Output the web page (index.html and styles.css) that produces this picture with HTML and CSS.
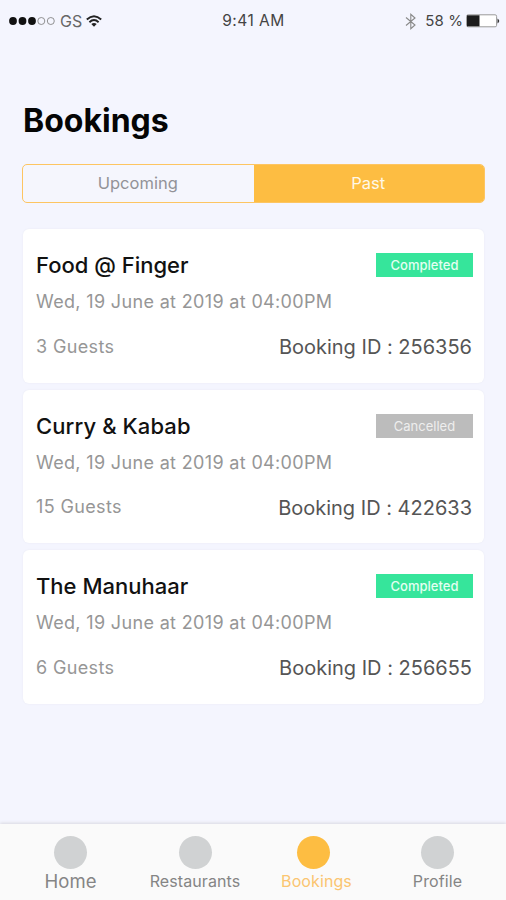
FILE: index.html
```
<!DOCTYPE html>
<html lang="en">
<head>
<meta charset="utf-8">
<title>Bookings</title>
<link rel="stylesheet" href="styles.css">
</head>
<body>
<div class="screen">
  <header class="status">
    <div class="carrier">
      <svg width="46" height="12" viewBox="0 0 46 12"><g fill="#111"><circle cx="4" cy="6" r="3.9"/><circle cx="13.5" cy="6" r="3.9"/><circle cx="23" cy="6" r="3.9"/></g><g fill="none" stroke="#777" stroke-width=".8"><circle cx="32.3" cy="6" r="3.5"/><circle cx="41.8" cy="6" r="3.5"/></g></svg>
      <span class="operator">GS</span>
      <svg class="wifi" width="16" height="12" viewBox="0 0 16 12"><g fill="none" stroke="#222" stroke-width="1.9"><path d="M.8 4.5Q8-2 15.2 4.5"/><path d="M3.4 7.2Q8 3 12.6 7.2"/></g><path d="M5.3 9Q8 6.8 10.7 9L8 11.8z" fill="#222"/></svg>
    </div>
    <span class="time">9:41 AM</span>
    <div class="power">
      <svg width="12" height="17" viewBox="0 0 12 17"><path d="M1 4.5 10 12 5.8 15.7V1.3L10 5 1 12.5" fill="none" stroke="#888" stroke-width="1.1"/></svg>
      <span class="percent">58 %</span>
      <svg class="battery" width="34" height="14" viewBox="0 0 34 14"><rect x=".6" y=".8" width="30" height="12" rx="1.5" fill="#fff" stroke="#999" stroke-width="1"/><path d="M1 1.3h12.5v11H1z" fill="#1c1c1c"/><path d="M31.5 4.5Q35 7 31.5 9.5z" fill="#333"/></svg>
    </div>
  </header>
  <main class="content">
    <h1 class="title">Bookings</h1>
    <div class="tabs">
      <div class="tab"><span>Upcoming</span></div>
      <div class="tab active"><span>Past</span></div>
    </div>
    <section class="list">
      <article class="card">
        <div class="row head"><h2 class="name">Food @ Finger</h2><span class="badge">Completed</span></div>
        <p class="date">Wed, 19 June at 2019 at 04:00PM</p>
        <div class="row foot"><span class="guests">3 Guests</span><span class="booking">Booking ID : 256356</span></div>
      </article>
      <article class="card">
        <div class="row head"><h2 class="name curry">Curry &amp; Kabab</h2><span class="badge cancelled">Cancelled</span></div>
        <p class="date">Wed, 19 June at 2019 at 04:00PM</p>
        <div class="row foot"><span class="guests">15 Guests</span><span class="booking">Booking ID : 422633</span></div>
      </article>
      <article class="card">
        <div class="row head"><h2 class="name">The Manuhaar</h2><span class="badge">Completed</span></div>
        <p class="date">Wed, 19 June at 2019 at 04:00PM</p>
        <div class="row foot"><span class="guests">6 Guests</span><span class="booking">Booking ID : 256655</span></div>
      </article>
    </section>
  </main>
  <nav class="nav">
    <div class="item home"><i class="dot"></i><span class="label">Home</span></div>
    <div class="item"><i class="dot"></i><span class="label">Restaurants</span></div>
    <div class="item current"><i class="dot"></i><span class="label">Bookings</span></div>
    <div class="item"><i class="dot"></i><span class="label">Profile</span></div>
  </nav>
</div>
</body>
</html>
```

FILE: styles.css
```
* { box-sizing: border-box; }
body { margin: 0; font-family: Inter, "Liberation Sans", sans-serif; font-feature-settings: "calt" 0; background: #f4f5fe; }
h1, h2, p { margin: 0; }
svg { display: block; flex: none; }
.screen { height: 900px; display: flex; flex-direction: column; overflow: hidden; }
.status { height: 42px; display: grid; grid-template-columns: 1fr auto 1fr; align-items: center; padding: 0 6px 0 9px; font-size: 15px; line-height: 20px; color: #444; white-space: nowrap; }
.carrier, .power { display: flex; align-items: center; }
.power { justify-content: flex-end; }
.operator { margin-left: 5px; font-size: 16px; color: #666; }
.wifi { margin-left: 4px; }
.time { font-size: 15.5px; letter-spacing: .5px; margin-right: 2px; }
.percent { margin: 0 3px 0 8px; letter-spacing: .1px; }
.content { flex: 1; padding: 59px 21px 0 22px; }
.title { margin-left: 1px; font-size: 32px; line-height: 40px; font-weight: 700; color: #050505; }
.tabs { display: flex; height: 39px; margin-top: 23px; border: 1.5px solid #fdc562; border-radius: 5px; overflow: hidden; background: #f5f6fd; }
.tab { flex: 1; display: flex; align-items: center; justify-content: center; padding-right: 1px; font-size: 16.5px; color: #929297; }
.tab span { margin-top: -1px; }
.tab.active { background: #fdbd42; color: #fff8e8; }
.list { display: flex; flex-direction: column; gap: 7px; margin: 26px 1px 0 1px; }
.card { height: 153.6px; padding: 23px 11px 0 13px; background: #fff; border-radius: 6px; box-shadow: 0 0 2px #e8e9f2; white-space: nowrap; }
.row { display: flex; align-items: center; justify-content: space-between; }
.head { height: 27px; }
.name { font-size: 22px; font-weight: 500; line-height: 27px; color: #111; }
.curry { letter-spacing: .1px; }
.badge { width: 97px; height: 24px; margin-top: -1px; background: #36e59b; color: #e4fff2; font-size: 13px; line-height: 25px; text-align: center; font-weight: 500; }
.badge.cancelled { background: #bcbcbc; color: #eee; font-weight: 400; }
.date { margin-top: 11px; font-size: 18px; line-height: 24px; letter-spacing: .34px; color: #969696; }
.foot { margin-top: 21px; height: 24px; }
.guests { margin-top: -2px; font-size: 18px; letter-spacing: .36px; color: #969696; }
.booking { margin-right: 1px; font-size: 20px; color: #555; }
.nav { height: 76px; display: grid; grid-template-columns: 123px 126px 111px 137px; padding: 12px 0 0 9px; background: #fafafa; box-shadow: 0 -1px 3px #d8d8e0; }
.item { display: flex; flex-direction: column; align-items: center; font-size: 16px; color: #858585; }
.dot { width: 33px; height: 33px; border-radius: 50%; background: #d0d2d3; }
.label { line-height: 20px; margin-top: 2px; letter-spacing: .1px; }
.home .label { font-size: 18.5px; }
.current { color: #fbc570; }
.current .dot { background: #fdbd42; }
.current .label { margin-left: 6px; }
```
